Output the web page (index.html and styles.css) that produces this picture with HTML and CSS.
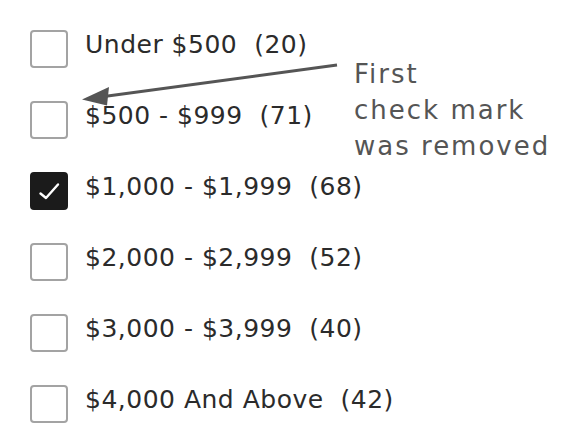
FILE: index.html
```html
<!DOCTYPE html>
<html>
<head>
<meta charset="utf-8">
<link rel="stylesheet" href="styles.css">
</head>
<body>
<div class="page">
  <ul class="filters">
    <li class="row"><span class="box"></span><span class="label">Under $500&nbsp; (20)</span></li>
    <li class="row"><span class="box"></span><span class="label">$500 - $999&nbsp; (71)</span></li>
    <li class="row"><span class="box checked"><svg viewBox="0 0 38 38" width="38" height="38"><path d="M10.5 21.5 L16 26 L28 12.5" fill="none" stroke="#fff" stroke-width="2.4" stroke-linecap="round" stroke-linejoin="round"/></svg></span><span class="label">$1,000 - $1,999&nbsp; (68)</span></li>
    <li class="row"><span class="box"></span><span class="label">$2,000 - $2,999&nbsp; (52)</span></li>
    <li class="row"><span class="box"></span><span class="label">$3,000 - $3,999&nbsp; (40)</span></li>
    <li class="row"><span class="box"></span><span class="label">$4,000 And Above&nbsp; (42)</span></li>
  </ul>
  <svg class="arrow" width="578" height="448" viewBox="0 0 578 448">
    <line x1="337" y1="65" x2="104" y2="96.5" stroke="#555" stroke-width="3"/>
    <polygon points="82,99.5 109,87 107,105.5" fill="#555"/>
  </svg>
  <div class="note">First<br>check mark<br>was removed</div>
</div>
</body>
</html>
```
FILE: styles.css
```css
html, body {
  margin: 0;
  padding: 0;
  background: #fff;
}
.page {
  position: relative;
  width: 578px;
  height: 448px;
  overflow: hidden;
}
.filters {
  list-style: none;
  margin: 0;
  padding: 30px 0 0 30px;
  display: flex;
  flex-direction: column;
  gap: 33px;
}
.row {
  display: flex;
  align-items: flex-start;
  gap: 17px;
  height: 38px;
}
.box {
  box-sizing: border-box;
  width: 38px;
  height: 38px;
  border: 2px solid #a3a3a3;
  border-radius: 4px;
  flex: none;
  display: block;
}
.box.checked {
  background: #1b1b1b;
  border-color: #1b1b1b;
  position: relative;
}
.box.checked svg {
  position: absolute;
  left: -2px;
  top: -2px;
}
.label {
  font-family: "DejaVu Sans", sans-serif;
  font-size: 25px;
  letter-spacing: 0.5px;
  color: #2b2b2b;
  line-height: 30px;
  margin-top: 0px;
  white-space: pre;
}
.arrow {
  position: absolute;
  left: 0;
  top: 0;
}
.note {
  position: absolute;
  left: 354px;
  top: 56px;
  font-family: "DejaVu Sans", sans-serif;
  font-size: 26px;
  line-height: 36px;
  color: #555;
  letter-spacing: 2px;
}
```
